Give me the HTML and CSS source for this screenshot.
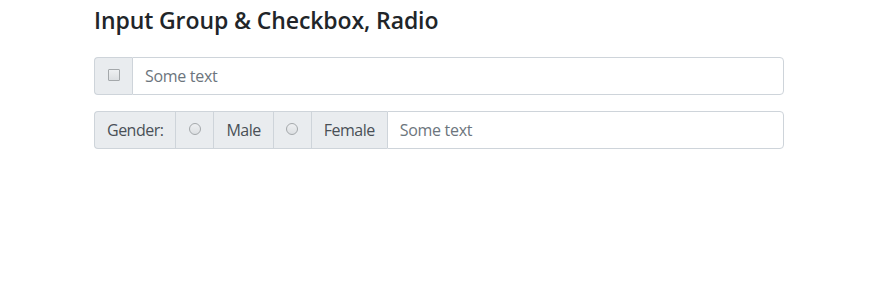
FILE: index.html
```html
<!DOCTYPE html>
<html>
<head>
<meta charset="utf-8">
<link rel="stylesheet" href="styles.css">
</head>
<body>
<div class="container">
  <h4 class="title">Input Group &amp; Checkbox, Radio</h4>
  <div class="input-group">
    <div class="addon box"><input class="check" type="checkbox"></div>
    <input class="field" type="text" placeholder="Some text">
  </div>
  <div class="input-group">
    <div class="addon">Gender:</div>
    <div class="addon box"><input class="radio" type="radio" name="g"></div>
    <div class="addon">Male</div>
    <div class="addon box"><input class="radio" type="radio" name="g"></div>
    <div class="addon">Female</div>
    <input class="field" type="text" placeholder="Some text">
  </div>
</div>
</body>
</html>
```
FILE: styles.css
```css
* { box-sizing: border-box; }
body {
  margin: 0;
  background: #fff;
  font-family: "Open Sans", "Noto Sans", sans-serif;
  color: #212529;
}
.container {
  width: 690px;
  margin-left: 94px;
  padding-top: 4px;
}
.title {
  margin: 0 0 20px 0;
  font-size: 23px;
  font-weight: 600;
  line-height: 33px;
  letter-spacing: -0.1px;
  color: #212529;
}
.input-group {
  display: flex;
  height: 38px;
  margin-bottom: 16px;
}
.addon {
  display: flex;
  align-items: center;
  padding: 0 12px;
  background: #e9ecef;
  border: 1px solid #ced4da;
  border-right: none;
  color: #495057;
  font-size: 16px;
  letter-spacing: -0.5px;
}
.input-group > :first-child { border-radius: 4px 0 0 4px; }
.addon.box { width: 38px; justify-content: center; padding: 0; }
.check, .radio {
  -webkit-appearance: none;
  appearance: none;
  margin: 0;
  width: 12px;
  height: 12px;
  border: 1px solid #a4a8ab;
  background: linear-gradient(#eef0f2, #dcdfe2);
}
.check { border-radius: 1px; margin-top: -2px; }
.radio { border-radius: 50%; margin-top: -2px; }
.field {
  flex: 1;
  min-width: 0;
  border: 1px solid #ced4da;
  border-radius: 0 4px 4px 0;
  padding: 0 12px;
  font-family: inherit;
  font-size: 16px;
  letter-spacing: -0.3px;
  color: #495057;
  outline: none;
}
.field::placeholder { color: #6c757d; opacity: 1; }
```
